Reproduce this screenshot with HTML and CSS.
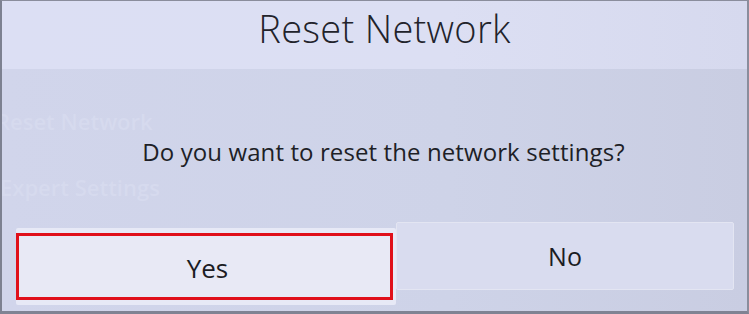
FILE: index.html
```html
<!DOCTYPE html>
<html lang="en">
<head>
<meta charset="utf-8">
<title>Reset Network</title>
<link rel="stylesheet" href="styles.css">
</head>
<body>
<div class="screen">
  <div class="header"><h1 class="title">Reset Network</h1></div>
  <div class="content">
    <div class="ghost ghost-one">Reset Network</div>
    <p class="question">Do you want to reset the network settings?</p>
    <div class="ghost ghost-two">Expert Settings</div>
    <div class="buttons">
      <div class="yes-card"><button class="btn btn-yes">Yes</button></div>
      <button class="btn btn-no">No</button>
    </div>
  </div>
</div>
</body>
</html>
```
FILE: styles.css
```css
html, body {
  margin: 0;
  padding: 0;
}
body {
  width: 749px;
  height: 314px;
  overflow: hidden;
  font-family: "Open Sans", "DejaVu Sans", sans-serif;
  color: #1d1e26;
}
.screen {
  box-sizing: border-box;
  width: 749px;
  height: 314px;
  border-top: 1px solid #8a8d9c;
  border-left: 2px solid #7d8191;
  border-right: 2px solid #8a8d9c;
  border-bottom: 3px solid #7f8393;
  background: linear-gradient(90deg, #d1d5eb 0%, #ced3e8 60%, #c9cde2 100%);
  overflow: hidden;
  display: flex;
  flex-direction: column;
}
.header {
  height: 68px;
  flex: none;
  background: linear-gradient(90deg, #dcdff4 0%, #dcdff3 60%, #d6d9ee 100%);
  display: flex;
  justify-content: center;
  align-items: flex-start;
  padding-left: 20px;
}
.title {
  margin: 0;
  padding-top: 1px;
  font-size: 38px;
  line-height: 52px;
  font-weight: 300;
  letter-spacing: 0.3px;
  color: #22232b;
}
.content {
  display: flex;
  flex-direction: column;
  flex: 1;
}
.ghost {
  font-size: 22px;
  line-height: 24px;
  font-weight: 600;
  color: #d6daee;
  white-space: nowrap;
}
.ghost-one {
  margin-top: 40px;
  margin-left: -6px;
}
.question {
  margin: 4px 0 0;
  padding-left: 18px;
  text-align: center;
  font-size: 24px;
  line-height: 30px;
  font-weight: 400;
  letter-spacing: 0.1px;
  color: #1e1f27;
}
.ghost-two {
  margin-top: 8px;
  margin-left: -2px;
}
.buttons {
  margin-top: 23px;
  display: flex;
  align-items: flex-start;
  padding-left: 14px;
}
.yes-card {
  margin-top: 6px;
  width: 380px;
  padding: 5px 3px 5px 0;
  background: #e7e9f6;
  box-sizing: border-box;
  border-radius: 2px;
}
.btn {
  font-family: "Open Sans", "DejaVu Sans", sans-serif;
  color: #1b1c23;
  cursor: pointer;
  display: block;
  margin: 0;
}
.btn-yes {
  width: 377px;
  height: 67px;
  box-sizing: border-box;
  border: 3px solid #e0101a;
  background: #e8e9f5;
  font-size: 26px;
  font-weight: 500;
  padding: 2px 0 0 6px;
}
.btn-no {
  width: 338px;
  height: 68px;
  box-sizing: border-box;
  border: 1px solid #e3e5f2;
  border-radius: 2px;
  background: #d9dcef;
  font-size: 25px;
  font-weight: 500;
  padding: 0;
}
```
